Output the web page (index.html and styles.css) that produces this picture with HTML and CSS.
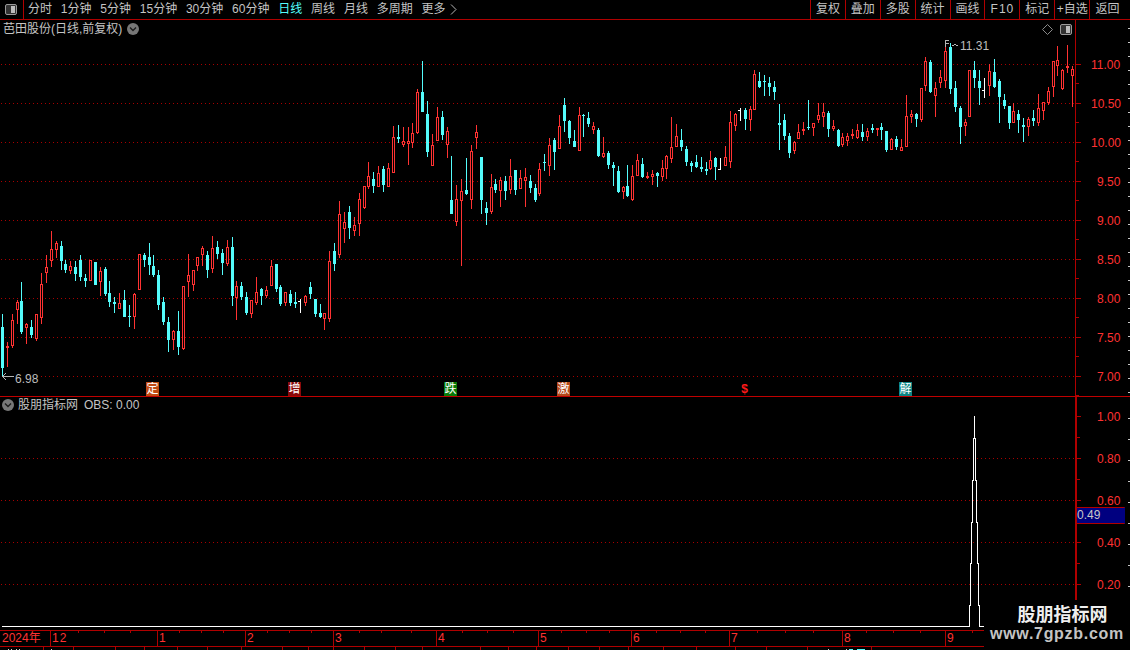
FILE: index.html
```html
<!DOCTYPE html>
<html lang="zh-CN">
<head>
<meta charset="utf-8">
<title>芭田股份</title>
<link rel="stylesheet" href="styles.css">
</head>
<body>
<div class="app">
  <header class="toolbar">
    <button class="layout-btn" aria-label="布局">
      <svg class="panel-icon" viewBox="0 0 12 11"><rect x="0.5" y="0.5" width="11" height="10" rx="1.5" class="pi-frame"/><rect x="6" y="2" width="4" height="7" class="pi-fill"/></svg>
    </button>
    <nav class="periods">
      <span>分时</span><span>1分钟</span><span>5分钟</span><span>15分钟</span><span>30分钟</span><span>60分钟</span>
      <span class="active">日线</span><span>周线</span><span>月线</span><span>多周期</span>
      <span class="more">更多<svg class="chev" viewBox="0 0 7 11"><path d="M1 0.5 L6 5.5 L1 10.5"/></svg></span>
    </nav>
    <div class="actions">
      <span>复权</span><span>叠加</span><span>多股</span><span>统计</span><span>画线</span><span class="f10">F10</span><span>标记</span><span>+自选</span><span>返回</span>
    </div>
  </header>

  <section class="pane main-pane">
    <div class="plot">
      <svg id="main-svg" class="canvas" viewBox="0 20 1075 376"></svg>
      <div class="pane-title main-title">
        <span>芭田股份(日线,前复权)</span>
        <svg class="drop" viewBox="0 0 12 12"><circle cx="6" cy="6" r="6"/><path d="M3 4.5 L6 7.5 L9 4.5"/></svg>
      </div>
      <div class="pane-tools">
        <svg class="diamond" viewBox="0 0 11 11"><path d="M5.5 0.5 L10.5 5.5 L5.5 10.5 L0.5 5.5 Z"/></svg>
        <svg class="panel-icon" viewBox="0 0 12 11"><rect x="0.5" y="0.5" width="11" height="10" rx="1.5" class="pi-frame"/><rect x="6" y="2" width="4" height="7" class="pi-fill"/></svg>
      </div>
      <span class="sig sig-ding">定</span>
      <span class="sig sig-zeng">增</span>
      <span class="sig sig-die">跌</span>
      <span class="sig sig-ji">激</span>
      <span class="sig sig-dollar">$</span>
      <span class="sig sig-jie">解</span>
      <span class="price-note note-high">11.31</span>
      <span class="price-note note-low">6.98</span>
    </div>
    <div class="axis">
      <svg id="main-axis" class="canvas" viewBox="1076 20 54 376">
        <text x="1091" y="69">11.00</text>
        <text x="1091" y="108">10.50</text>
        <text x="1091" y="147">10.00</text>
        <text x="1097" y="186">9.50</text>
        <text x="1097" y="225">9.00</text>
        <text x="1097" y="264">8.50</text>
        <text x="1097" y="303">8.00</text>
        <text x="1097" y="342">7.50</text>
        <text x="1097" y="381">7.00</text>
      </svg>
    </div>
  </section>

  <section class="pane sub-pane">
    <div class="plot">
      <svg id="sub-svg" class="canvas" viewBox="0 397 1075 233"></svg>
      <div class="pane-title sub-title">
        <svg class="drop" viewBox="0 0 12 12"><circle cx="6" cy="6" r="6"/><path d="M3 4.5 L6 7.5 L9 4.5"/></svg>
        <span>股朋指标网</span>
        <span class="obs">OBS: 0.00</span>
      </div>
    </div>
    <div class="axis axis-thick">
      <svg id="sub-axis" class="canvas" viewBox="1077 397 53 233">
        <text x="1097" y="421">1.00</text>
        <text x="1097" y="463">0.80</text>
        <text x="1097" y="505">0.60</text>
        <text x="1097" y="547">0.40</text>
        <text x="1097" y="589">0.20</text>
      </svg>
      <span class="cursor-value">0.49</span>
    </div>
  </section>

  <section class="timeaxis">
    <span class="tcell t-year">2024年</span>
    <span class="tcell t-12">12</span>
    <span class="tcell t-1">1</span>
    <span class="tcell t-2">2</span>
    <span class="tcell t-3">3</span>
    <span class="tcell t-4">4</span>
    <span class="tcell t-5">5</span>
    <span class="tcell t-6">6</span>
    <span class="tcell t-7">7</span>
    <span class="tcell t-8">8</span>
    <span class="tcell t-9">9</span>
    <svg id="time-ticks" class="canvas" viewBox="0 631 1130 15"></svg>
  </section>
  <svg id="strip" class="strip" viewBox="0 647 1130 3"></svg>

  <aside class="watermark">
    <div class="wm-name">股朋指标网</div>
    <div class="wm-url">www.7gpzb.com</div>
  </aside>
</div>
<script src="chart.js"></script>
</body>
</html>
```
FILE: styles.css
```css
* { box-sizing: border-box; }
html, body { margin: 0; padding: 0; background: #000; }
body {
  font-family: "Liberation Sans", "Noto Sans CJK SC", sans-serif;
  font-size: 12px;
  color: #c4c4c4;
}
.app {
  position: relative;
  width: 1130px;
  height: 650px;
  overflow: hidden;
  background: #000;
  display: flex;
  flex-direction: column;
}

/* toolbar */
.toolbar {
  height: 20px;
  flex: none;
  display: flex;
  align-items: stretch;
  border-bottom: 1px solid #b00000;
  line-height: 19px;
}
.layout-btn {
  width: 24px;
  padding: 0 2px 0 0;
  background: none;
  border: 0;
  border-right: 1px solid #b00000;
  display: flex;
  align-items: center;
  justify-content: center;
}
.panel-icon { width: 12px; height: 11px; display: block; }
.pi-frame { fill: #333; stroke: #9a9a9a; stroke-width: 1; }
.pi-fill { fill: #bdbdbd; }
.periods {
  display: flex;
  gap: 8.8px;
  padding-left: 4px;
  flex: 1;
  white-space: nowrap;
}
.periods .active { color: #54fcfc; }
.more { display: flex; align-items: center; gap: 4px; }
.chev { width: 7px; height: 11px; }
.chev path { fill: none; stroke: #b5b5b5; stroke-width: 1; }
.actions { display: flex; width: 320px; }
.actions span {
  width: 35px;
  border-left: 1px solid #b00000;
  text-align: center;
  white-space: nowrap;
}
.actions span:last-child { width: 41px; padding-right: 5px; }
.actions .f10 { letter-spacing: 1px; }

/* panes */
.pane { display: flex; flex: none; }
.main-pane { height: 377px; border-bottom: 1px solid #c00000; }
.sub-pane { height: 233px; }
.plot { position: relative; width: 1075px; flex: none; }
.axis { position: relative; flex: 1; border-left: 1px solid #b00000; }
.axis-thick { border-left-width: 2px; }
.canvas { position: absolute; left: 0; top: 0; width: 100%; height: 100%; display: block; shape-rendering: crispEdges; }
.axis text {
  fill: #ff3232;
  font-size: 12px;
  font-family: "Liberation Sans", sans-serif;
  shape-rendering: auto;
}

.pane-title {
  position: absolute;
  display: flex;
  align-items: center;
  white-space: nowrap;
  line-height: 14px;
}
.main-title { left: 3px; top: 2px; gap: 5px; }
.sub-title { left: 2px; top: 1px; gap: 4px; }
.obs { margin-left: 2px; }
.drop { width: 12px; height: 12px; display: block; }
.drop circle { fill: #777; }
.drop path { fill: none; stroke: #1c1c1c; stroke-width: 1.4; }
.pane-tools {
  position: absolute;
  left: 1042px;
  top: 4px;
  display: flex;
  align-items: center;
  gap: 7px;
}
.diamond { width: 11px; height: 11px; display: block; }
.diamond path { fill: none; stroke: #8a8a8a; stroke-width: 1; }

.sig {
  position: absolute;
  top: 362px;
  width: 13px;
  height: 14px;
  color: #fff;
  font-size: 12px;
  line-height: 14px;
  text-align: center;
  overflow: hidden;
}
.sig-ding { left: 146px; background: #c04a12; }
.sig-zeng { left: 288px; background: #8a0a0a; }
.sig-die { left: 444px; background: #087a08; }
.sig-ji { left: 557px; background: #b5481a; }
.sig-dollar { left: 738px; color: #ff1a1a; font-weight: bold; }
.sig-jie { left: 899px; background: #0d8585; }

.price-note {
  position: absolute;
  background: #000;
  color: #bdbdbd;
  line-height: 14px;
}
.note-high { left: 960px; top: 19px; }
.note-low { left: 15px; top: 352px; padding-right: 3px; }

.cursor-value {
  position: absolute;
  left: 0;
  top: 110px;
  width: 48px;
  height: 17px;
  background: #000080;
  border-top: 1px solid #b00000;
  border-bottom: 1px solid #b00000;
  border-right: 1px solid #000080;
  color: #c8c8c8;
  line-height: 15px;
  padding-left: 0;
}

/* time axis */
.timeaxis {
  position: relative;
  height: 17px;
  flex: none;
  display: flex;
  border-top: 1px solid #b00000;
  border-bottom: 1px solid #b00000;
  color: #ff3232;
  line-height: 15px;
}
.tcell { border-left: 1px solid #b00000; padding-left: 1px; flex: none; white-space: nowrap; }
.t-year { width: 50px; border-left: 0; padding-left: 2px; }
.t-12 { width: 107px; letter-spacing: 1px; }
.t-1 { width: 88px; }
.t-2 { width: 88px; }
.t-3 { width: 103px; }
.t-4 { width: 102px; }
.t-5 { width: 93px; }
.t-6 { width: 98px; }
.t-7 { width: 113px; }
.t-8 { width: 103px; }
.t-9 { width: 185px; }
.strip { height: 3px; width: 1130px; flex: none; display: block; shape-rendering: crispEdges; }

/* watermark */
.watermark {
  position: absolute;
  right: 0;
  bottom: 0;
  width: 146px;
  height: 50px;
  background: #000;
  text-align: center;
}
.wm-name { color: #eee; font-weight: bold; font-size: 18px; line-height: 22px; margin-top: 4px; padding-left: 11px; }
.wm-url { color: #c4c4c4; font-weight: bold; font-size: 16px; line-height: 18px; letter-spacing: 0.7px; margin-top: -1px; white-space: nowrap; }
```
FILE: chart.js
```js
var NS = "http://www.w3.org/2000/svg";
var RED = "#ff3232", CYAN = "#54fcfc", WHITE = "#ffffff", LINE = "#b00000";

function rect(svg, x, y, w, h, fill) {
  var r = document.createElementNS(NS, "rect");
  r.setAttribute("x", x); r.setAttribute("y", y);
  r.setAttribute("width", w); r.setAttribute("height", h);
  r.setAttribute("fill", fill);
  svg.appendChild(r);
}
function dotted(svg, y, x0, x1) {
  for (var x = x0; x < x1; x += 4) rect(svg, x, y, 1, 1, "#a80000");
}

/* [type, zoomX, high, bodyTop, bodyBottom, low] read off zoomed crops: each set has its own origin */
var sets = [
 {ox:0, oy:220, d:[
 "c7,282,321,444,470","r22,367,378,384,440","r37,282,300,378,384","r52,240,246,270,312","c64,186,243,336,342",
 "r79,310,312,324,372","c94,300,321,345,354","r109,282,282,357,362","r124,159,192,294,312","r139,105,141,159,189",
 "r154,33,87,123,141","r169,63,69,90,114","c184,63,78,123,150","c196,120,132,150,159","r211,123,138,153,162",
 "c226,123,141,162,183","c241,105,120,171,183","c256,162,174,183,201","r271,120,120,183,183","c286,126,126,195,195",
 "r301,141,153,186,228","c316,141,147,222,228","c328,183,219,246,261","c343,231,246,252,279","r358,219,249,267,267",
 "c373,210,240,291,291","c388,255,288,291,321","r403,219,222,291,327","r418,102,102,210,210","c433,99,105,120,141",
 "c448,69,111,135,165","c460,105,138,165,171","c475,150,165,255,270","c490,231,246,306,315","c505,291,306,360,396",
 "r520,330,333,360,390","c535,273,333,381,405","r550,198,198,387,390","r565,102,165,186,231","r580,150,150,195,213",
 "r592,111,111,138,153","r607,78,84,105,138","c622,93,105,150,174","r637,48,84,147,159","c652,63,81,102,117",
 "c667,87,99,129,165","r682,60,81,132,138","c697,51,81,228,258","r709,183,198,234,300","c724,186,198,231,240",
 "c739,216,231,279,285","r754,240,240,282,294","r769,171,216,249,255","c784,204,207,228,255","r799,198,210,228,234",
 "r814,120,138,198,198"]},
 {ox:270, oy:240, d:[
 "c18,72,72,147,156","c31,135,141,192,198","r46,156,156,189,198","c61,150,162,189,198","c76,156,186,192,204",
 "w91,177,183,183,219","r106,165,168,189,198","c121,126,141,162,177","c136,177,177,222,231","c151,192,219,231,234",
 "r163,219,219,237,270","r178,33,63,237,246","c193,9,33,72,93"]},
 {ox:280, oy:60, d:[
 "r178,423,462,585,594","r193,456,486,507,549","c208,438,456,504,537","r223,471,495,513,528","r238,399,417,492,528",
 "r253,378,378,444,447","r265,306,348,381,387","c280,336,357,378,399","r295,318,339,381,381","c310,318,327,375,396",
 "r325,309,324,381,381","r340,198,231,339,339","c355,195,231,237,249","r370,201,243,255,261","r385,201,243,252,315",
 "r397,189,219,249,264","r412,87,96,219,222","c427,3,96,156,156","c442,123,162,276,291","r457,222,255,318,318",
 "r472,141,171,243,243","c487,153,171,225,240","r502,201,213,255,294","c514,288,420,462,462","r529,375,417,486,498",
 "r544,357,393,423,618","c559,294,390,402,405","r574,255,273,420,447","r589,195,216,234,267","c604,291,291,420,462",
 "c619,426,444,459,495","r634,342,381,456,462","c646,357,372,390,399","r661,351,360,393,441","c676,348,363,393,420",
 "r691,297,348,390,402","c706,330,330,390,405","r721,330,354,387,387","r736,324,351,363,441","c751,345,363,384,399",
 "c766,372,384,420,426","r778,309,327,402,408","c793,282,306,309,333","r808,234,255,318,348","c823,234,240,276,330",
 "r838,165,198,267,267"]},
 {ox:540, oy:60, d:[
 "c73,114,135,183,216","c88,180,183,234,252","c103,210,243,261,261","r118,141,165,273,273","c130,162,165,168,231",
 "c145,156,174,192,201","r160,186,198,210,222","c175,204,210,288,291","r190,231,279,291,294","c205,273,279,315,327",
 "c220,306,315,324,378","c235,318,333,396,399","r250,378,381,396,417","c262,315,378,408,411","r277,315,348,420,423",
 "r292,282,300,348,348","c307,294,312,351,354","r322,336,348,354,357","r337,330,342,351,375","c352,336,339,348,381",
 "r367,300,324,351,363","r379,285,288,327,357","r394,171,261,297,309","r409,192,228,261,261","c424,207,240,261,273",
 "c439,258,267,306,318","c454,303,309,318,336","c469,285,306,321,324","c484,291,321,327,336","c499,306,327,333,345",
 "r511,273,300,327,330","c526,291,294,321,360","w541,294,327,327,330","r556,258,291,318,318","r571,153,186,306,324",
 "r586,159,162,198,213","w601,144,150,150,183","c616,144,150,177,210","r631,138,147,180,213","r643,30,42,150,150",
 "c658,36,63,81,84","c673,45,63,66,108","c688,51,69,81,108","c703,63,81,96,120","c718,132,189,195,270",
 "c733,162,180,228,240","c748,219,228,279,294","r763,243,246,273,282","r775,192,216,237,237","r790,186,207,213,225",
 "c805,120,201,204,210","r820,189,189,204,228","r835,129,165,180,189"]},
 {ox:800, oy:40, d:[
 "r70,189,216,231,261","c85,213,219,267,291","r100,240,258,267,273","c115,267,270,318,321","r127,279,291,315,321",
 "r142,279,288,303,318","r157,267,282,288,297","r172,252,270,294,297","c187,252,276,291,303","r202,264,273,291,303",
 "c217,252,264,270,279","r232,264,264,270,288","c244,249,261,270,300","c259,273,273,330,336","r274,294,297,330,330",
 "c289,288,297,321,330","r304,297,321,333,333","r319,165,228,321,321","r334,210,222,231,249","c349,219,222,237,261",
 "r364,144,144,240,246","r376,51,63,138,153","c391,60,66,156,159","r406,126,144,168,231","r421,90,111,129,144",
 "r436,6,33,123,144","c451,9,21,147,162","c466,123,144,201,216","c481,198,204,261,312","r496,237,246,258,288",
 "r508,90,90,231,231","c523,63,90,114,144","c538,90,123,144,195","w553,114,150,150,174","r568,72,93,138,168",
 "c583,57,96,141,144","c598,117,123,171,249","c613,162,180,198,207","c628,198,198,249,267","r640,189,213,249,249",
 "c655,210,222,240,279","c670,234,255,261,306","r685,231,237,261,288","c700,210,234,243,258","r715,162,204,249,258",
 "r730,186,186,213,240","r745,141,153,189,195","r760,63,63,141,171","r772,18,60,78,108","r787,87,90,147,150",
 "r802,15,78,84,99","r817,78,87,108,201"]}
];

var main = document.getElementById("main-svg");
[64,103,142,181,220,259,298,337,376].forEach(function (y) {
  dotted(main, y, y === 376 ? 41 : 1, 1075);
});

sets.forEach(function (s) {
  s.d.forEach(function (row) {
    var type = row.charAt(0);
    var v = row.slice(1).split(",").map(Number);
    var x = Math.floor(s.ox + v[0] / 3);
    var py = function (z) { return Math.round(s.oy + z / 3); };
    var hi = py(v[1]), t = py(v[2]), b = py(v[3]), lo = py(v[4]);
    if (b - t < 1) b = t + 1;
    if (type === "w") {
      rect(main, x, hi, 1, lo - hi, WHITE);
      rect(main, x - 2, t, 2, 1, WHITE);
      return;
    }
    var col = type === "r" ? RED : CYAN;
    rect(main, x, hi, 1, Math.max(lo - hi, 1), col);
    rect(main, x - 1, t, 3, b - t, col);
    if (type === "r" && b - t > 2) rect(main, x, t + 1, 1, b - t - 2, "#000");
  });
});

/* high/low pointers */
var GREY = "#b5b5b5";
rect(main, 2, 376, 12, 1, GREY);
rect(main, 3, 375, 1, 3, GREY);
rect(main, 4, 374, 1, 1, GREY);
rect(main, 4, 378, 1, 1, GREY);
rect(main, 5, 373, 1, 1, GREY);
rect(main, 5, 379, 1, 1, GREY);
rect(main, 945, 40, 4, 1, GREY);
rect(main, 945, 40, 1, 7, GREY);
rect(main, 946, 43, 3, 1, GREY);
rect(main, 952, 45, 2, 1, GREY);
rect(main, 954, 44, 2, 1, GREY);
rect(main, 956, 45, 2, 1, GREY);

/* axis ticks */
var mainAxis = document.getElementById("main-axis");
[64,103,142,181,220,259,298,337,376].forEach(function (y) {
  rect(mainAxis, 1076, y, 5, 1, LINE);
  if (y + 19 < 396) rect(mainAxis, 1076, y + 19, 3, 1, LINE);
});
for (var ry = 28; ry < 396; ry += 14) rect(mainAxis, 1128, ry, 2, 1, "#c8c8c8");

var sub = document.getElementById("sub-svg");
[458,500,542,584].forEach(function (y) { dotted(sub, y, 1, 1075); });

/* OBS line: baseline, stepped peak (one pixel column per step), baseline */
rect(sub, 2, 626, 968, 1, WHITE);
var steps = [605, 563, 522, 480, 438, 416];
steps.forEach(function (top, i) {
  var bottom = i === 0 ? 626 : steps[i - 1];
  rect(sub, 969 + i, top, 1, bottom - top + 1, WHITE);
  if (i < 5) rect(sub, 979 - i, top, 1, bottom - top + 1, WHITE);
});
rect(sub, 979, 626, 5, 1, WHITE);

var subAxis = document.getElementById("sub-axis");
[416,458,500,542,584].forEach(function (y) {
  rect(subAxis, 1077, y, 4, 1, LINE);
  if (y + 21 < 600) rect(subAxis, 1077, y + 21, 3, 1, LINE);
});
for (var sy = 418; sy < 600; sy += 21) rect(subAxis, 1128, sy, 2, 1, "#c8c8c8");

/* time ticks */
var tt = document.getElementById("time-ticks");
[78,104,130,179,201,223,267,289,311,359,381,411,462,487,513,561,586,609,656,680,705,757,785,813,866,893,920,972].forEach(function (x) {
  rect(tt, x, 631, 1, 2, LINE);
});

/* lower strip: clipped next row */
var strip = document.getElementById("strip");
[43,73,115,144,177,207,241,282,308,333,364,395,422,480,508,536,568,599,628,663,696,735,766,807,871].forEach(function (x) {
  rect(strip, x, 647, 1, 3, LINE);
});
[8,11,16,19,51].forEach(function (x) { rect(strip, x, 649, 1, 1, "#d0d0d0"); });
[828,846].forEach(function (x) { rect(strip, x, 649, 1, 1, "#d0d0d0"); });
rect(strip, 849, 649, 4, 1, CYAN);
rect(strip, 857, 649, 8, 1, CYAN);
```
